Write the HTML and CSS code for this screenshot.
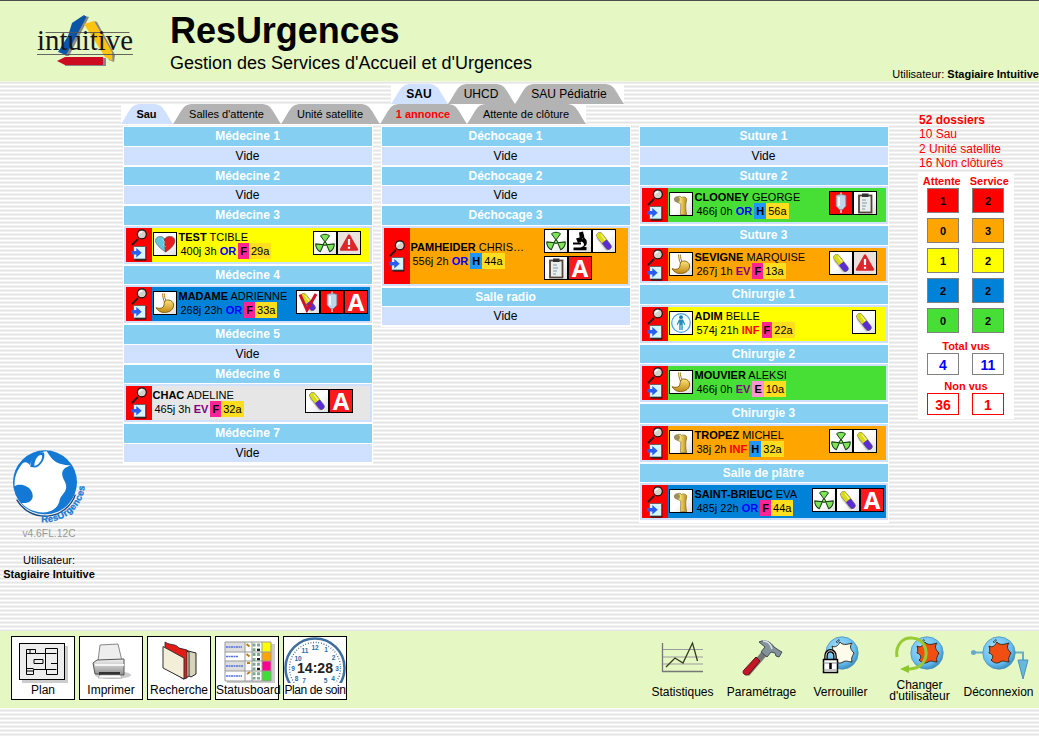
FILE: index.html
```html
<!DOCTYPE html>
<html lang="fr">
<head>
<meta charset="utf-8">
<title>ResUrgences</title>
<link rel="stylesheet" href="styles.css">
</head>
<body>
<svg class="defs" width="0" height="0">
  <defs>
    <linearGradient id="gBone" x1="0" x2="1"><stop offset="0" stop-color="#8a6410"/><stop offset=".45" stop-color="#f6e27a"/><stop offset="1" stop-color="#b98d1c"/></linearGradient>
    <linearGradient id="gStom" x1="0" y1="0" x2="0" y2="1"><stop offset="0" stop-color="#fbe37e"/><stop offset="1" stop-color="#c18a12"/></linearGradient>
    <radialGradient id="gGlobe" cx=".4" cy=".35" r=".7"><stop offset="0" stop-color="#a5e0fb"/><stop offset=".7" stop-color="#66bdf0"/><stop offset="1" stop-color="#3585b8"/></radialGradient>
    <linearGradient id="gTile" x1="0" y1="0" x2="1" y2="1"><stop offset=".5" stop-color="#fff"/><stop offset="1" stop-color="#dcdcdc"/></linearGradient>
    <linearGradient id="gGrey" x1="0" y1="0" x2="0" y2="1"><stop offset="0" stop-color="#f2f2f2"/><stop offset="1" stop-color="#8e8e8e"/></linearGradient>
  </defs>
  <symbol id="mag" viewBox="0 0 17 17"><path d="M1 16 7 10" stroke="#2a1a1a" stroke-width="2"/><circle cx="10.8" cy="5.3" r="4.5" fill="#d2d2c8" stroke="#111" stroke-width="1.2"/><path d="M8.3 5.2a2.6 2.6 0 0 1 3-2.4" stroke="#fff" stroke-width="1.4" fill="none"/></symbol>
  <symbol id="arrow" viewBox="0 0 16 15"><path d="M3.5 1h11.8v13.5H3.5z" fill="#111"/><path d="M2.5.5h12v12.5h-12z" fill="#d5f5ff" stroke="#555" stroke-width=".8"/><path d="M.3 5h5V2l5.4 4.7-5.4 4.7V8.6h-5z" fill="#2a5cf0"/></symbol>
  <symbol id="heart" viewBox="1 1 22 22"><rect width="24" height="24" fill="url(#gTile)"/><path d="M12.500 20C8 17 2.500 12.500 2.500 8.500 2.500 4 9.500 3 11.500 7z" fill="#5cc9dc" stroke="#666" stroke-width=".7"/><path d="M12.500 20 11.500 7C14 3 22 3.500 21.800 9c0 4-5 8.500-9.300 11z" fill="#e81d1d" stroke="#733" stroke-width=".7"/><path d="M9 7 12 10 10.500 13 13 15" stroke="#fff" stroke-width=".6" fill="none" opacity=".7"/></symbol>
  <symbol id="bone" viewBox="1 1 22 22"><rect width="24" height="24" fill="url(#gTile)"/><path d="M11.500 22.500 11.800 12C10 10.800 8.800 11 7 9.500 4.500 8 5.500 4.500 8.500 4.800 10 3.800 12 4.300 12.500 5.500 15.500 4 18.500 5.500 17.500 9c-1 3-1 9 .2 13.500z" fill="url(#gBone)" stroke="#7a5c18" stroke-width=".6"/><circle cx="8" cy="7.500" r="2.800" fill="#9b9160"/></symbol>
  <symbol id="stomach" viewBox="1 1 22 22"><rect width="24" height="24" fill="url(#gTile)"/><path d="M11.300 2.500c0 3 .7 5 1.700 7M9.600 2.500c0 3 .7 6 2 9" stroke="#a87710" fill="none" stroke-width="1"/><path d="M11.500 11c1-3.300 8-2.500 9 2 .8 5.500-4 8.500-9 8.500-4 .2-6.500-1.800-8.500-4.800 3 1 5.500.8 7-.5 1.500-1.500.7-3.300 1.500-5.200z" fill="url(#gStom)" stroke="#80590c" stroke-width=".9"/></symbol>
  <symbol id="man" viewBox="1 1 22 22"><rect width="24" height="24" fill="#fff"/><circle cx="12" cy="12" r="9.300" fill="#f4fbff" stroke="#4aa6d0" stroke-width="1.200"/><circle cx="12" cy="6.200" r="1.900" fill="#1b7fae"/><path d="M10 8.500h4l2.300 5-.9.500-1.700-3V19h-1.300v-5h-.8v5h-1.300v-8l-1.700 3-.9-.5z" fill="#238cba"/></symbol>
  <symbol id="rad" viewBox="1 1 22 22"><rect width="24" height="24" fill="url(#gTile)"/><g fill="#7be457" stroke="#173a12" stroke-width="1"><path d="M12 11 7.500 4.800C9.800 2.800 14.200 2.800 16.500 4.800z"/><path d="M12 11 7.500 4.800C9.800 2.800 14.200 2.800 16.500 4.800z" transform="rotate(120 12 12.800)"/><path d="M12 11 7.500 4.800C9.800 2.800 14.200 2.800 16.500 4.800z" transform="rotate(240 12 12.800)"/><circle cx="12" cy="12.800" r="1.600"/></g></symbol>
  <symbol id="warn" viewBox="1 1 22 22"><rect width="24" height="24" fill="#e9e2df"/><path d="M12 4.500 20 18.500H4z" fill="#e0262b" stroke="#d8282c" stroke-width="2.400" stroke-linejoin="round"/><path d="M12 8v6M12 15.800v2" stroke="#fff" stroke-width="2.200"/></symbol>
  <symbol id="pill" viewBox="1 1 22 22"><rect width="24" height="24" fill="url(#gTile)"/><g transform="rotate(52 12 12)"><rect x="4" y="10.500" width="18" height="6" rx="3" fill="#999" opacity=".45"/><rect x="2" y="9" width="20" height="6" rx="3" fill="#5b2bd6" stroke="#555" stroke-width=".6"/><path d="M12.500 9H5a3 3 0 0 0 0 6h7.500z" fill="#d8dc12"/><path d="M5 10.500h7" stroke="#f8f8a0"/></g></symbol>
  <symbol id="pillv" viewBox="1 1 22 22"><use href="#pill" x="1" y="1" width="22" height="22"/><path d="M4 4.500 11 20 20 4" fill="none" stroke="#d00f28" stroke-width="3"/></symbol>
  <symbol id="drip" viewBox="1 1 22 22"><rect width="24" height="24" fill="#fb0808"/><path d="M12 1.500v3M12 17v5" stroke="#e8c0c0" stroke-width="1.800"/><path d="M7.200 4.500c2-1 7.600-1 9.600 0V15L13.500 18.500h-3L7.200 15z" fill="#bcd7e8" stroke="#8090a4" stroke-width=".8"/><path d="M10 6v9" stroke="#fff" stroke-width="1.500"/></symbol>
  <symbol id="clip" viewBox="1 1 22 22"><rect width="24" height="24" fill="url(#gTile)"/><rect x="6" y="4.500" width="12.500" height="17" fill="#e9eeee" stroke="#554439" stroke-width="1.800"/><rect x="9" y="2.500" width="6.500" height="3.500" fill="#333"/><path d="M9 9h4M9 12h5M9 15h4M9 18h3" stroke="#8299a2" stroke-width="1.200"/></symbol>
  <symbol id="micro" viewBox="1 1 22 22"><rect width="24" height="24" fill="url(#gTile)"/><path d="m11 3.500 4-1 1.500 6-4.500 2zM8 9.500l5-1.500 2 4-5 2z"/><path d="M15 8c5 2 5 8 1 10h2.500v3.200h-13V18.500h7c4-1 5-4 1-6z"/><path d="M5 13.500h8v2H5z"/></symbol>
  <symbol id="swirl" viewBox="0 0 34 34"><circle cx="17" cy="17" r="16.200" fill="url(#gGlobe)" stroke="#4b94bd" stroke-width=".8"/><path d="M7 10c3 2 6 0 8-4 2 3 6 3 12 1-3 4-1 7 2 10-2 4-3 5-2 9-3 0-6-2-9 0-3 2-6 1-9-2 3-2 2-6-2-7 1-2 1-4 0-7z" stroke="#332c20" stroke-width="1"/><path d="m11 6 3-2.500c1 1 0 2-1.500 3z" fill="none" stroke="#333" stroke-width=".8"/></symbol>
</svg>

<div class="page">
  <header class="top">
    <svg class="brand" width="100" height="56" viewBox="0 0 100 56">
      <path d="M48 2 52 3 32 42H28z" fill="#888"/><path d="M47 1 35 9 31 22 21 38 29 41 49.500 3z" fill="#0a55a8"/>
      <path d="M57 7 60 8 78 41 77 48 72 46z" fill="#888"/><path d="M47 10 57 7 75 38 75.500 47 68 43z" fill="#fcc410"/>
      <path d="M28 44H69V52H28z" fill="#888"/><path d="M20 47 28 43H66V51H28z" fill="#cc0a20"/>
      <path d="M8.500 18.500h84M0 40.500h96" stroke="#555" stroke-width=".9"/>
      <text x="0" y="35.500" class="brand-text" textLength="96" lengthAdjust="spacingAndGlyphs">intuitive</text>
    </svg>
    <div class="titles"><h1>ResUrgences</h1><p>Gestion des Services d'Accueil et d'Urgences</p></div>
    <div class="who">Utilisateur: <b>Stagiaire Intuitive</b></div>
  </header>

  <main class="middle">
    <aside class="side">
      <svg width="80" height="80" viewBox="30 25 240 240">
        <circle cx="135" cy="128" r="96" fill="#1379d4"/><path d="M50 180A97 97 0 0 0 226 165" fill="none" stroke="#17477b" stroke-width="4"/>
        <path d="M62 78C70 65 80 64 89 76 100 48 119 36 140 35 155 57 165 77 213 77 184 87 181 100 194 125 207 152 189 160 180 177 177 199 163 213 139 218 109 220 82 210 65 190 94 193 105 174 94 154 84 137 59 130 44 140 42 115 50 95 62 78Z" fill="#fff"/>
        <path d="M91 82C91 52 117 32 132 39 139 60 115 88 100 83" fill="#1379d4"/><path d="M103 79C103 58 117 43 126 47 129 61 115 77 103 79z" fill="#fff"/>
        <path id="rim" d="M124 247A119 119 0 0 0 254 116" fill="none"/>
        <text class="rim-text"><textPath href="#rim" textLength="188">ResUrgences</textPath></text>
      </svg>
      <div class="version">v4.6FL.12C</div>
      <div class="user">Utilisateur:<br><b>Stagiaire Intuitive</b></div>
    </aside>

    <section class="board">
      <nav class="tabs main-tabs"><a class="tab on" style="width:57px">SAU</a><a class="tab" style="width:67px">UHCD</a><a class="tab" style="width:109px">SAU Pédiatrie</a></nav>
      <nav class="tabs sub-tabs"><a class="tab on" style="width:52px">Sau</a><a class="tab" style="width:108px">Salles d'attente</a><a class="tab" style="width:99px">Unité satellite</a><a class="tab alert" style="width:87px">1 annonce</a><a class="tab" style="width:119px">Attente de clôture</a></nav>
      <div class="cols">
        <div class="col">
          <div class="room"><h2>Médecine 1</h2><div class="vide">Vide</div></div>
          <div class="room"><h2>Médecine 2</h2><div class="vide">Vide</div></div>
          <div class="room full"><h2>Médecine 3</h2><div class="slot"><div class="pat yellow"><div class="act"><svg class="mag"><use href="#mag"/></svg><svg class="arr"><use href="#arrow"/></svg></div><svg class="ic organ"><use href="#heart"/></svg><div class="info"><p><b>TEST</b> TCIBLE</p><p class="l2">400j 3h <b class="or">OR</b> <b class="sx f">F</b><i>29a</i></p></div><div class="icons" style="margin-right:9px"><svg class="ic"><use href="#rad"/></svg><svg class="ic"><use href="#warn"/></svg></div></div></div></div>
          <div class="room full"><h2>Médecine 4</h2><div class="slot"><div class="pat blue"><div class="act"><svg class="mag"><use href="#mag"/></svg><svg class="arr"><use href="#arrow"/></svg></div><svg class="ic organ"><use href="#stomach"/></svg><div class="info"><p><b>MADAME</b> ADRIENNE</p><p class="l2">268j 23h <b class="or">OR</b> <b class="sx f">F</b><i>33a</i></p></div><div class="icons" style="margin-right:2px"><svg class="ic"><use href="#pillv"/></svg><svg class="ic"><use href="#drip"/></svg><span class="ic a-letter">A</span></div></div></div></div>
          <div class="room"><h2>Médecine 5</h2><div class="vide">Vide</div></div>
          <div class="room full"><h2>Médecine 6</h2><div class="slot"><div class="pat grey"><div class="act"><svg class="mag"><use href="#mag"/></svg><svg class="arr"><use href="#arrow"/></svg></div><div class="info"><p><b>CHAC</b> ADELINE</p><p class="l2">465j 3h <b class="ev">EV</b> <b class="sx f">F</b><i>32a</i></p></div><div class="icons" style="margin-right:17px"><svg class="ic"><use href="#pill"/></svg><span class="ic a-letter">A</span></div></div></div></div>
          <div class="room"><h2>Médecine 7</h2><div class="vide">Vide</div></div>
        </div>
        <div class="col">
          <div class="room"><h2>Déchocage 1</h2><div class="vide">Vide</div></div>
          <div class="room"><h2>Déchocage 2</h2><div class="vide">Vide</div></div>
          <div class="room tall"><h2>Déchocage 3</h2><div class="slot"><div class="pat orange"><div class="act"><svg class="mag"><use href="#mag"/></svg><svg class="arr"><use href="#arrow"/></svg></div><div class="info"><p><b>PAMHEIDER</b> CHRIS…</p><p class="l2">556j 2h <b class="or">OR</b> <b class="sx h">H</b><i>44a</i></p></div><div class="icons wrap" style="margin-right:12px"><svg class="ic"><use href="#rad"/></svg><svg class="ic"><use href="#micro"/></svg><svg class="ic"><use href="#pill"/></svg><svg class="ic"><use href="#clip"/></svg><span class="ic a-letter">A</span></div></div></div></div>
          <div class="room"><h2>Salle radio</h2><div class="vide">Vide</div></div>
        </div>
        <div class="col">
          <div class="room"><h2>Suture 1</h2><div class="vide">Vide</div></div>
          <div class="room full"><h2>Suture 2</h2><div class="slot"><div class="pat green"><div class="act"><svg class="mag"><use href="#mag"/></svg><svg class="arr"><use href="#arrow"/></svg></div><svg class="ic organ"><use href="#bone"/></svg><div class="info"><p><b>CLOONEY</b> GEORGE</p><p class="l2">466j 0h <b class="or">OR</b> <b class="sx h">H</b><i>56a</i></p></div><div class="icons" style="margin-right:9px"><svg class="ic"><use href="#drip"/></svg><svg class="ic"><use href="#clip"/></svg></div></div></div></div>
          <div class="room full"><h2>Suture 3</h2><div class="slot"><div class="pat orange"><div class="act"><svg class="mag"><use href="#mag"/></svg><svg class="arr"><use href="#arrow"/></svg></div><svg class="ic organ"><use href="#stomach"/></svg><div class="info"><p><b>SEVIGNE</b> MARQUISE</p><p class="l2">267j 1h <b class="ev">EV</b> <b class="sx f">F</b><i>13a</i></p></div><div class="icons" style="margin-right:9px"><svg class="ic"><use href="#pill"/></svg><svg class="ic"><use href="#warn"/></svg></div></div></div></div>
          <div class="room full"><h2>Chirurgie 1</h2><div class="slot"><div class="pat yellow"><div class="act"><svg class="mag"><use href="#mag"/></svg><svg class="arr"><use href="#arrow"/></svg></div><svg class="ic organ"><use href="#man"/></svg><div class="info"><p><b>ADIM</b> BELLE</p><p class="l2">574j 21h <b class="inf">INF</b> <b class="sx f">F</b><i>22a</i></p></div><div class="icons" style="margin-right:10px"><svg class="ic"><use href="#pill"/></svg></div></div></div></div>
          <div class="room full"><h2>Chirurgie 2</h2><div class="slot"><div class="pat green"><div class="act"><svg class="mag"><use href="#mag"/></svg><svg class="arr"><use href="#arrow"/></svg></div><svg class="ic organ"><use href="#stomach"/></svg><div class="info"><p><b>MOUVIER</b> ALEKSI</p><p class="l2">466j 0h <b class="ev">EV</b> <b class="sx e">E</b><i>10a</i></p></div></div></div></div>
          <div class="room full"><h2>Chirurgie 3</h2><div class="slot"><div class="pat orange"><div class="act"><svg class="mag"><use href="#mag"/></svg><svg class="arr"><use href="#arrow"/></svg></div><svg class="ic organ"><use href="#bone"/></svg><div class="info"><p><b>TROPEZ</b> MICHEL</p><p class="l2">38j 2h <b class="inf">INF</b> <b class="sx h">H</b><i>32a</i></p></div><div class="icons" style="margin-right:9px"><svg class="ic"><use href="#rad"/></svg><svg class="ic"><use href="#pill"/></svg></div></div></div></div>
          <div class="room full"><h2>Salle de plâtre</h2><div class="slot"><div class="pat blue"><div class="act"><svg class="mag"><use href="#mag"/></svg><svg class="arr"><use href="#arrow"/></svg></div><svg class="ic organ"><use href="#bone"/></svg><div class="info"><p><b>SAINT-BRIEUC</b> EVA</p><p class="l2">485j 22h <b class="or">OR</b> <b class="sx f">F</b><i>44a</i></p></div><div class="icons" style="margin-right:2px"><svg class="ic"><use href="#rad"/></svg><svg class="ic"><use href="#pill"/></svg><span class="ic a-letter">A</span></div></div></div></div>
        </div>
      </div>
    </section>

    <aside class="stats">
      <div class="sum"><b>52 dossiers</b><br>10 Sau<br>2 Unité satellite<br>16 Non clôturés</div>
      <div class="counts">
        <div class="heads"><span>Attente</span><span>Service</span></div>
        <div class="pair"><span class="red">1</span><span class="red">2</span></div>
        <div class="pair"><span class="orange">0</span><span class="orange">3</span></div>
        <div class="pair"><span class="yellow">1</span><span class="yellow">2</span></div>
        <div class="pair"><span class="blue">2</span><span class="blue">2</span></div>
        <div class="pair"><span class="green">0</span><span class="green">2</span></div>
        <div class="cap">Total vus</div>
        <div class="pair big seen"><span>4</span><span>11</span></div>
        <div class="cap second">Non vus</div>
        <div class="pair big unseen"><span>36</span><span>1</span></div>
      </div>
    </aside>
  </main>

  <footer class="bar">
    <div class="tools">
      <a class="tool"><svg viewBox="0 0 62 46"><rect x="10" y="9" width="46" height="37" fill="#ccc"/><rect x="7.500" y="6.500" width="45" height="36" fill="#ededed" stroke="#000"/><path d="M14.500 12.500h9v4h10v-5h12v26h-11v-5h-13v5h-7zM22 22.500h9v4h-9zM33.500 16.500v16h11M33.500 16.500h11M39 26.500h6M14.500 31.500h7M14.500 34h7M18 12.500v4M15 16.500h8" fill="none" stroke="#000"/></svg>Plan</a>
      <a class="tool"><svg viewBox="0 0 62 46"><ellipse cx="33" cy="38" rx="18" ry="4" fill="#ccc"/><path d="m20 8 18-1 4 17H18z" fill="#eee" stroke="#888"/><path d="m17 23 27-1v16l-29-1-2-11z" fill="url(#gGrey)" stroke="#555"/><path d="M15 28h29" stroke="#f5f5f5" stroke-width="2"/><path d="M19 35h21v3H19z" fill="#333"/><path d="m20 38 20 0 2 3H18z" fill="#fff" stroke="#999" stroke-width=".6"/></svg>Imprimer</a>
      <a class="tool"><svg viewBox="0 0 62 46"><path d="m25 10 23 6v21l-5 3-18-9z" fill="#d8d4ba" stroke="#222"/><path d="m20 8 21 7v24l-5 3-16-9z" fill="#f1edd5" stroke="#222"/><path d="M17 5c6 4 10 1 14 6l8 2v28l-4 1-18-14z" fill="#e21d18" stroke="#222" stroke-width=".8"/><path d="M15 9.500 36 21v21L15 31z" fill="#f2eed8" stroke="#333"/></svg>Recherche</a>
      <a class="tool"><svg viewBox="0 0 62 46"><rect x="11" y="7" width="48" height="40" fill="#ccc"/><path d="M9 5h46v39H9z" fill="#fff"/><path d="M9 5h20v10H9zM9 24h20v10H9z" fill="#ddd"/><path d="M46 5h9v10h-9z" fill="#ff0"/><path d="M46 15h9v9h-9z" fill="#ffa500"/><path d="M46 24h9v10h-9z" fill="#ff0090"/><path d="M46 34h9v10h-9z" fill="#3ede35"/><path d="M9 5h46v39H9zM9 15h46M9 24h46M9 34h46M29 5v39M36 5v39M46 5v39" stroke="#999" fill="none"/><path d="M10 10h16M10 19.500h12M10 29h17M10 39h16" stroke="#5370e8" stroke-width="1.500" stroke-dasharray="2 .5"/><path d="m30.500 7 3 2.500M30.500 17l3 2.500M31 26h3M31 37l3-2" stroke="#b8801e" stroke-width="2"/><path d="M38 6.500v36M42.500 6.500v36" stroke="#80a890" stroke-width="3" stroke-dasharray="3 1.800"/><path d="M42.500 12v2M42.500 21v2M42.500 31v2" stroke="#222" stroke-width="3"/></svg>Statusboard</a>
      <a class="tool"><svg viewBox="0 0 62 46"><circle cx="31" cy="31" r="29.500" fill="#fff" stroke="#3e6e9e" stroke-width="2.500"/><circle cx="31" cy="31" r="25.500" fill="none" stroke="#2e6190" stroke-width="1.400" stroke-dasharray=".8 1.870"/><g class="hours"><text x="31" y="12.500">12</text><text x="42" y="15">1</text><text x="49.500" y="22.500">2</text><text x="53" y="33.500">3</text><text x="49" y="43.500">4</text><text x="21" y="16">11</text><text x="14" y="23.500">10</text><text x="9" y="33.500">9</text><text x="12.500" y="43.500">8</text><text x="20" y="45.500">7</text><text x="41.500" y="45.500">5</text></g><text class="time" x="31" y="35.500" textLength="36" lengthAdjust="spacingAndGlyphs">14:28</text></svg><span class="tight">Plan de soin</span></a>
    </div>
    <div class="links">
      <a class="link"><svg viewBox="0 0 60 48"><path d="M10 12.500h40M10 20h40M10 27h40" stroke="#999da0" stroke-width="1.200"/><path d="M9.500 6v29M9 34.500h41" stroke="#777" stroke-width="1.300"/><path d="m13 30 9-9 8 5 9.500-20 5 18" fill="none" stroke="#343a20" stroke-width="1.300"/></svg>Statistiques</a>
      <a class="link"><svg viewBox="0 0 60 48"><path d="m31 13 5 4-19 22-4-4z" fill="#777"/><path d="m12 33 12-13 4 4-11 13c-3 3-8-1-5-4z" fill="#c51625" stroke="#5d1015"/><path d="M27 5c6-3 12 0 15 5l6 4 2 1-3 5-3-1-1-3-4-1-4 5-6-5 4-5z" fill="#84929a" stroke="#414f57"/><path d="M31 4c5 0 8 4 9 8" stroke="#dce6ea" stroke-width="1.500" fill="none"/></svg>Paramétrage</a>
      <a class="link"><svg viewBox="0 0 60 48"><use href="#swirl" x="14" y="-1" width="34" height="34" fill="#fdfbe9"/><path d="M15 23v-4c0-7 9-7 9 0v4" fill="none" stroke="#000" stroke-width="3.500"/><path d="M15 23v-4c0-7 9-7 9 0v4" fill="none" stroke="#ddd" stroke-width="1"/><path d="M12.500 22.500h14v13h-14z" fill="#fff" stroke="#000" stroke-width="1.500"/><path d="M12.500 26h14M12.500 33h14" stroke="#888"/><path d="M19.500 26v6" stroke="#000" stroke-width="2.500"/></svg>Verrouiller</a>
      <a class="link two"><svg viewBox="0 0 60 43"><use href="#swirl" x="20" y="-1" width="34" height="34" fill="#f04e12"/><path d="M7 20C5 8 13 0 22 1c15 1 18 18 9 27-5 4-10 4-17 4" fill="none" stroke="#98ca35" stroke-width="3"/><path d="m10 32 9-4v8z" fill="#8cc72b"/></svg>Changer<br>d'utilisateur</a>
      <a class="link"><svg viewBox="0 0 60 48"><path d="M4 15.500h50v9" fill="none" stroke="#69aecb" stroke-width="2"/><circle cx="4.500" cy="15.500" r="2.500" fill="#65aaca"/><use href="#swirl" x="13" y="-1" width="34" height="34" fill="#f04e12"/><path d="M49 23h10l-5 19z" fill="#68b7dd" stroke="#4593b9"/></svg>Déconnexion</a>
    </div>
  </footer>
</div>
</body>
</html>
```

FILE: styles.css
```css
* { box-sizing: border-box; }
body { margin: 0; font: 11px "Liberation Sans", Arial, sans-serif; color: #000; overflow: hidden; }
h1, h2, p { margin: 0; }
.defs { display: block; height: 0; }
.page {
  width: 1039px; height: 736px; overflow: hidden;
  background: repeating-linear-gradient(to bottom, #fff 0 1px, #f3f3f3 1px 2px, #e5e5e5 2px 3px, #f0f0f0 3px 4px);
}

.top { display: flex; height: 82px; border-top: 1px solid #4c4c4c; border-bottom: 1px solid #f2f8e2; background: #e5f7c3; padding-left: 37px; }
.brand { margin-top: 13px; flex: none; }
.brand-text { font: 29px "Liberation Serif", serif; fill: #15151c; }
.titles { margin-left: 33px; width: 400px; }
.titles h1 { font-size: 36px; line-height: 40px; margin-top: 10px; letter-spacing: -.05px; }
.titles p { font-size: 18px; line-height: 20px; margin-top: 2px; white-space: nowrap; }
.who { margin: 66px 0 0 324px; white-space: nowrap; line-height: 14px; }

.middle { display: flex; height: 549px; }
.side { width: 98px; flex: none; text-align: center; padding-top: 366px; line-height: 14px; }
.side svg { display: block; margin-left: 10px; }
.version { color: #999; margin-top: -1px; font-size: 10.3px; }
.user { margin-top: 12px; white-space: nowrap; }
.rim-text { font: bold 28px "Liberation Sans", sans-serif; fill: #1379d4; stroke: #1379d4; stroke-width: .8px; }

.board { width: 792px; flex: none; padding: 2px 0 0 23px; }
.tabs { display: flex; width: max-content; height: 20px; background: #fff; }
.main-tabs { margin-left: 270px; font-size: 12px; }
.tab {
  display: block; height: 20px; line-height: 21px; text-align: center; background: #b3b3b3; white-space: nowrap; padding-right: 1px;
  clip-path: polygon(0 100%, 2px 17px, 8px 7px, 11px 3px, 14px 1px, 18px 0, calc(100% - 18px) 0, calc(100% - 14px) 1px, calc(100% - 11px) 3px, calc(100% - 8px) 7px, calc(100% - 2px) 17px, 100% 100%);
}
.tab.on { background: #d0e1ff; font-weight: bold; }
.tab.alert { color: #f00; font-weight: bold; }
.cols { display: flex; align-items: flex-start; gap: 8px; margin: 2px 0 0 2px; }
.col { width: 250px; background: #fff; padding: 1px 1px 0; }
.room { display: flex; flex-direction: column; height: 39.7px; padding-bottom: 2px; }
.room:last-child { padding-bottom: 3px; }
.room.full { height: 59.4px; }
.room.tall { height: 81.4px; }
.room h2 { height: 18.6px; line-height: 18px; margin-bottom: 1px; background: #84cff2; color: #fff; font-size: 12px; text-align: center; flex: none; padding-right: 1px; }
.vide { flex: 1; background: #d0e1ff; text-align: center; font-size: 12px; line-height: 18px; padding-right: 1px; }
.slot { flex: 1; background: #d0e1ff; padding: 2px; display: flex; }
.pat { flex: 1; display: flex; min-width: 0; }
.act { width: 26px; background: #f00; display: flex; flex-direction: column; align-items: center; justify-content: center; flex: none; }
.mag { width: 17px; height: 17px; }
.arr { width: 16px; height: 15px; }
.ic { width: 24px; height: 24px; border: 1px solid #000; flex: none; display: block; }
.organ { margin: 4px 1px 0; }
.info { padding: 3px 0 0 .5px; white-space: nowrap; width: 120px; }
.tall .info { align-self: center; padding: 0 0 0 .5px; margin-top: -2px; }
.info p { line-height: 12px; }
.info .l2 { line-height: 16px; padding-left: 2px; }
.l2 i { font-style: normal; background: #ffdd1f; padding: 2px; display: inline-block; line-height: 12px; }
.sx { display: inline-block; padding: 2px; line-height: 12px; margin-left: -1px; }
.or { color: #00f; } .ev { color: #800080; } .inf { color: #f00; }
.sx.f { background: #ff2396; } .sx.h { background: #1e96ff; } .sx.e { background: #ff94d2; }
.icons { display: flex; margin: 3px 0 0 auto; }
.icons.wrap { flex-wrap: wrap; width: 72px; row-gap: 3px; align-content: flex-start; margin-top: 1px; }
.a-letter { font: bold 24px/21px "Open Sans", "Liberation Sans", sans-serif; color: #fff; background: #f9191c; text-align: center; }
.red { background: #f00; } .orange { background: #ffa500; } .yellow { background: #ff0; }
.blue { background: #0082d8; } .green { background: #47df36; } .grey { background: #e6e6e6; }

.stats { padding: 31px 0 0 28px; }
.sum { color: #f00; font-size: 12px; line-height: 14.4px; padding-left: 1px; }
.counts { width: 96px; height: 247px; background: #fff; margin-top: 1px; padding: 3px 0 0; color: #f00; }
.heads { display: flex; font-weight: bold; font-size: 11px; line-height: 13px; }
.heads span { width: 47.5px; text-align: center; }
.pair { display: flex; gap: 13px; padding-left: 9px; margin-bottom: 5px; }
.pair span { width: 32px; height: 25px; border: 1px solid #808080; text-align: center; font-weight: bold; line-height: 24px; color: #000; }
.cap { font-weight: bold; line-height: 12px; text-align: center; margin-top: 7px; }
.cap.second { margin-top: 5px; }
.pair.big { margin: 1px 0 0; }
.pair.big span { height: 22px; font-size: 14px; line-height: 22px; }
.pair.seen span { color: #00f; }
.pair.unseen span { color: #f00; border-color: #f00; }

.bar { display: flex; height: 77px; background: #e5f7c3; padding-left: 11px; }
.tools { display: flex; gap: 4px; padding-top: 5px; }
.tool { width: 64px; height: 64px; border: 1px solid #000; background: #fff; text-align: center; font-size: 12px; line-height: 15px; white-space: nowrap; }
.tool > svg { display: block; width: 62px; height: 46px; overflow: hidden; }
.tool .tight { letter-spacing: -.4px; }
.hours { font: bold 6.5px "Liberation Sans", sans-serif; fill: #2c6da6; text-anchor: middle; }
.time { font: bold 14px "Liberation Sans", sans-serif; fill: #222; text-anchor: middle; }
.links { display: flex; margin-left: 296px; padding-top: 6px; }
.link { width: 79px; text-align: center; font-size: 12px; line-height: 15px; white-space: nowrap; flex: none; }
.link > svg { display: block; width: 60px; height: 48px; margin: 0 auto; overflow: visible; }
.link.two { line-height: 11px; }
.link.two > svg { height: 43px; }
```
